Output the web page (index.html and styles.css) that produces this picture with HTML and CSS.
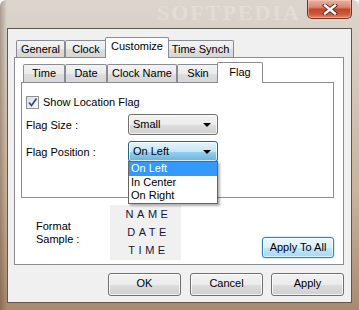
FILE: index.html
```html
<!doctype html>
<html>
  <head>
    <title>Clock Options</title>
    <link rel="stylesheet" href="styles.css">
  </head>
  <body>
    <div class="window">
      <div class="titlebar">
        <span class="watermark">SOFTPEDIA</span>
        <div class="close-btn">
          <svg width="16" height="11" viewBox="0 0 16 11">
            <path d="M3 1.5 L13 9.5 M13 1.5 L3 9.5" stroke="#5a2a22" stroke-width="4.2" stroke-linecap="square"/>
            <path d="M3 1.5 L13 9.5 M13 1.5 L3 9.5" stroke="#fff" stroke-width="2.4" stroke-linecap="square"/>
          </svg>
        </div>
      </div>
      <div class="client">
        <div class="tabs outer-tabs">
          <div class="tab-row">
            <div class="tab" style="width:49px">General</div>
            <div class="tab" style="width:42px">Clock</div>
            <div class="tab selected" style="width:64px">Customize</div>
            <div class="tab" style="width:67px">Time Synch</div>
          </div>
          <div class="panel outer-panel">
            <div class="tabs inner-tabs">
              <div class="tab-row">
                <div class="tab" style="width:42px">Time</div>
                <div class="tab" style="width:42px">Date</div>
                <div class="tab" style="width:70px">Clock Name</div>
                <div class="tab" style="width:42px">Skin</div>
                <div class="tab selected" style="width:46px">Flag</div>
              </div>
              <div class="panel inner-panel">
                <label class="check-row">
                  <span class="checkbox">
                    <svg width="11" height="11" viewBox="0 0 11 11">
                      <path d="M2 5.5 L4.5 8.5 L9.5 1.5" fill="none" stroke="#3b4f8c" stroke-width="1.8"/>
                    </svg>
                  </span>
                  Show Location Flag
                </label>
                <div class="field-row">
                  <span class="field-label">Flag Size :</span>
                  <div class="combo">Small<span class="arrow"></span></div>
                </div>
                <div class="field-row">
                  <span class="field-label">Flag Position :</span>
                  <div class="combo-wrap">
                    <div class="combo combo-focus">On Left<span class="arrow"></span></div>
                    <ul class="dropdown-list">
                      <li class="active">On Left</li>
                      <li>In Center</li>
                      <li>On Right</li>
                    </ul>
                  </div>
                </div>
              </div>
            </div>
            <div class="sample-row">
              <div class="sample-label">Format<br>Sample :</div>
              <div class="sample-box">
                <div>NAME</div>
                <div>DATE</div>
                <div>TIME</div>
              </div>
              <div class="btn btn-hot apply-all">Apply To All</div>
            </div>
          </div>
        </div>
        <div class="dialog-buttons">
          <div class="btn">OK</div>
          <div class="btn">Cancel</div>
          <div class="btn">Apply</div>
        </div>
      </div>
    </div>
  </body>
</html>
```
FILE: styles.css
```css
body {
  margin: 0;
  font-family: "Liberation Sans", Arial, sans-serif;
  font-size: 11px;
  color: #000;
  background: #fff;
}
.window {
  width: 359px;
  height: 310px;
  box-sizing: border-box;
  padding: 0 7px 7px 7px;
  display: flex;
  flex-direction: column;
  background: linear-gradient(90deg, rgba(80, 50, 30, .35) 0, rgba(80, 50, 30, 0) 7px),
    linear-gradient(#dcd5cd 0, #d6cdc2 60px, #c7b199 200px, #a98a70 100%);
  border-radius: 6px 6px 0 0;
  overflow: hidden;
}
.titlebar {
  height: 28px;
  flex: none;
  display: flex;
  justify-content: flex-end;
  align-items: flex-start;
  position: relative;
}
.watermark {
  position: absolute;
  left: 150px;
  top: 1px;
  font-family: "Liberation Serif", serif;
  font-weight: bold;
  font-size: 22px;
  line-height: 24px;
  letter-spacing: 2px;
  color: rgba(255, 255, 255, .22);
}
.close-btn {
  width: 45px;
  height: 19px;
  box-sizing: border-box;
  border: 1px solid #6d3426;
  border-top: none;
  border-radius: 0 0 5px 5px;
  background: linear-gradient(#eab3a3 0, #d98670 40%, #c4452b 52%, #cc5a3e 80%, #df8a6a 100%);
  box-shadow: inset 0 0 0 1px rgba(255, 210, 190, .45);
  display: flex;
  align-items: center;
  justify-content: center;
  position: relative;
}
.client {
  flex: 1;
  border: 1px solid #5e5650;
  background: #f0f0f0;
}

/* tabs */
.tab-row {
  display: flex;
  align-items: flex-end;
  height: 20px;
  padding-left: 2px;
}
.tab {
  box-sizing: border-box;
  border: 1px solid #898c95;
  border-bottom: none;
  border-radius: 2px 2px 0 0;
  background: linear-gradient(#f3f3f3, #ebebeb 50%, #dedede 51%, #d6d6d6);
  text-align: center;
  white-space: nowrap;
  flex: none;
}
.tab.selected {
  background: #fff;
  margin: 0 -2px -1px -2px;
  position: relative;
  z-index: 2;
  height: 21px;
}
.outer-tabs {
  margin: 8px 7px 0 6px;
}
.outer-tabs .tab {
  height: 17px;
  line-height: 16px;
}
.outer-tabs .tab.selected {
  height: 21px;
  line-height: 16px;
}
.inner-tabs {
  margin: 4px 9px 0 6px;
}
.inner-tabs .tab {
  height: 18px;
  line-height: 17px;
}
.inner-tabs .tab.selected {
  height: 21px;
  line-height: 18px;
}
.panel {
  border: 1px solid #898c95;
  background: #fff;
  box-sizing: border-box;
  position: relative;
}
.outer-panel {
  height: 208px;
}
.inner-panel {
  height: 116px;
  padding: 13px 0 0 4px;
}

/* form */
.check-row {
  display: flex;
  align-items: center;
  height: 13px;
  line-height: 13px;
}
.checkbox {
  width: 13px;
  height: 13px;
  box-sizing: border-box;
  border: 1px solid #8e8f8f;
  background: linear-gradient(135deg, #dcdcdc, #fdfdfd);
  margin-right: 4px;
  display: flex;
  align-items: center;
  justify-content: center;
}
.field-row {
  display: flex;
  align-items: center;
  margin-top: 5px;
}
.field-row + .field-row {
  margin-top: 6px;
}
.field-label {
  width: 102px;
}
.combo-wrap {
  position: relative;
}
.combo {
  width: 90px;
  height: 21px;
  line-height: 19px;
  box-sizing: border-box;
  border: 1px solid #707070;
  border-radius: 3px;
  padding-left: 4px;
  background: linear-gradient(#f2f2f2, #ebebeb 50%, #dddddd 51%, #cfcfcf);
  box-shadow: inset 0 0 0 1px rgba(255, 255, 255, .7);
  position: relative;
}
.combo-focus {
  border-color: #2c628b;
  background: linear-gradient(#e5f4fc, #c4e5f6 50%, #98d1ef 51%, #68b3db);
}
.arrow {
  position: absolute;
  right: 6px;
  top: 8px;
  width: 0;
  height: 0;
  border-left: 4px solid transparent;
  border-right: 4px solid transparent;
  border-top: 4px solid #000;
}
.dropdown-list {
  position: absolute;
  left: 0;
  top: 20px;
  width: 90px;
  box-sizing: border-box;
  margin: 0;
  padding: 0;
  list-style: none;
  background: #fff;
  border: 1px solid #646464;
  box-shadow: 2px 2px 2px rgba(0, 0, 0, .3);
  z-index: 5;
}
.dropdown-list li {
  height: 13.5px;
  line-height: 13px;
  padding-left: 2px;
}
.dropdown-list li.active {
  background: #3399ff;
  color: #fff;
}

/* sample */
.sample-row {
  display: flex;
  align-items: center;
  margin-top: 7px;
  height: 55px;
  padding-left: 21px;
}
.sample-label {
  width: 74px;
  line-height: 13px;
}
.sample-box {
  width: 71px;
  height: 55px;
  background: #f0f0f0;
  text-align: center;
  line-height: 18px;
  letter-spacing: 3.5px;
  padding-left: 6px;
  box-sizing: border-box;
  color: #15153a;
}

/* buttons */
.btn {
  box-sizing: border-box;
  border: 1px solid #707070;
  border-radius: 3px;
  background: linear-gradient(#f2f2f2, #ebebeb 50%, #dddddd 51%, #cfcfcf);
  box-shadow: inset 0 0 0 1px rgba(255, 255, 255, .75);
  text-align: center;
}
.btn-hot {
  border-color: #3c7fb1;
  background: linear-gradient(#eaf6fd, #d9f0fc 50%, #bee6fd 51%, #a7d9f5);
  box-shadow: inset 0 0 0 1px rgba(255, 255, 255, .6), 0 0 2px #6cc4f0;
}
.apply-all {
  width: 72px;
  height: 21px;
  line-height: 19px;
  margin: 0 9px 2px auto;
  align-self: flex-end;
}
.dialog-buttons {
  display: flex;
  justify-content: flex-end;
  margin-top: 8px;
  padding-right: 7px;
}
.dialog-buttons .btn {
  width: 73px;
  height: 23px;
  line-height: 19px;
  padding-bottom: 2px;
  margin-left: 9px;
}
.dialog-buttons .btn:last-child {
  margin-left: 8px;
}
```
